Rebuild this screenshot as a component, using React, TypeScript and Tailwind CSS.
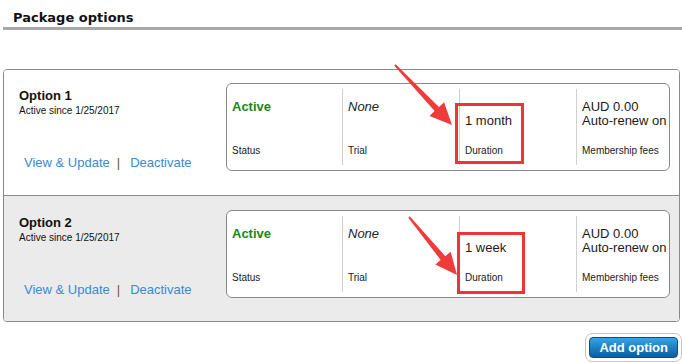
import React from "react";

type Opt = { name: string; duration: string; shaded: boolean };

const font = "font-['Liberation_Sans',Arial,sans-serif]";

function Card({ duration }: { duration: string }) {
  return (
    <div className="flex h-[88px] w-[444px] rounded-[6px] border border-[#8a8a8a] bg-white text-[#1a1a1a]">
      <div className="flex w-[115px] flex-col justify-between pl-[5px] pt-[16px] pb-[13px]">
        <div className="text-[13px] leading-[14px] font-bold text-[#18871a]">Active</div>
        <div className="text-[10px] leading-[12px]">Status</div>
      </div>
      <div className="my-[5px] w-px bg-[#cfcfcf]" />
      <div className="flex w-[116px] flex-col justify-between pl-[5px] pt-[16px] pb-[13px]">
        <div className="text-[13px] leading-[14px] italic text-[#222]">None</div>
        <div className="text-[10px] leading-[12px]">Trial</div>
      </div>
      <div className="my-[5px] w-px bg-[#cfcfcf]" />
      <div className="flex w-[116px] flex-col justify-between pl-[5px] pt-[16px] pb-[13px]">
        <div className="text-[13px] leading-[14px]">
          <div>&nbsp;</div>
          <div>{duration}</div>
        </div>
        <div className="text-[10px] leading-[12px]">Duration</div>
      </div>
      <div className="my-[5px] w-px bg-[#cfcfcf]" />
      <div className="flex flex-1 flex-col justify-between pl-[5px] pt-[16px] pb-[13px]">
        <div className="text-[13px] leading-[14px]">
          <div>AUD 0.00</div>
          <div>Auto-renew on</div>
        </div>
        <div className="text-[10px] leading-[12px]">Membership fees</div>
      </div>
    </div>
  );
}

function Row({ opt, first }: { opt: Opt; first: boolean }) {
  return (
    <div
      className={
        "flex " +
        (first ? "h-[125px] pt-[13px] bg-white" : "h-[126px] pt-[14px] border-t border-[#8a8a8a] bg-[#ebebeb]")
      }
    >
      <div className="flex w-[222px] flex-col">
        <div className="pl-[15px] pt-[5px]">
          <div className="text-[13px] leading-[16px] font-bold text-[#111]">{opt.name}</div>
          <div className="text-[10px] leading-[13px] text-[#111]">Active since 1/25/2017</div>
        </div>
        <div className="mt-[38px] flex pl-[20px] text-[13px] leading-[15px]">
          <span className="text-[#3a89cf]">View &amp; Update</span>
          <span className="ml-[7px] text-[#6b5a2e]">|</span>
          <span className="ml-[10px] text-[#3a89cf]">Deactivate</span>
        </div>
      </div>
      <Card duration={opt.duration} />
    </div>
  );
}

export default function App() {
  const opts: Opt[] = [
    { name: "Option 1", duration: "1 month", shaded: false },
    { name: "Option 2", duration: "1 week", shaded: true },
  ];
  return (
    <div className={"relative h-[363px] w-[682px] overflow-hidden bg-white " + font}>
      <div className="pl-[13px] pt-[10px] font-['DejaVu_Sans',sans-serif] text-[13px] leading-[15px] font-bold text-[#111]">
        Package options
      </div>
      <div className="ml-[3px] mt-[2px] h-[3px] bg-[#a8a8a8]" />
      <div className="mt-[39px] ml-[3px] mr-[2px] overflow-hidden rounded-[4px] border border-[#8a8a8a]">
        {opts.map((o, i) => (
          <Row key={o.name} opt={o} first={i === 0} />
        ))}
      </div>
      <div className="mt-[11px] flex justify-end">
        <div className="rounded-[7px] border border-[#c4c4c4] bg-white p-[3px]">
          <div className="flex h-[21px] items-center rounded-[4px] border border-[#0a4f86] bg-gradient-to-b from-[#35a5e6] to-[#0a5d9e] px-[9px] text-[13px] font-bold text-white">
            Add option
          </div>
        </div>
      </div>

      <div className="pointer-events-none absolute left-[455px] top-[103px] h-[61px] w-[69px] border-[3px] border-[#ee3434]" />
      <div className="pointer-events-none absolute left-[457px] top-[232px] h-[62px] w-[68px] border-[3px] border-[#ee3434]" />
      <svg className="pointer-events-none absolute left-0 top-0" width="682" height="363" viewBox="0 0 682 363">
        <polygon
          fill="#f03b3b"
          points="394.3,65.7 395.7,64.3 439,107 444.1,102.2 452,125 429.5,116 434.6,111.1"
        />
        <polygon
          fill="#f03b3b"
          points="408.3,217.7 409.7,216.3 445.3,256.2 450.7,251.7 457,275 435.3,264.5 440.7,260"
        />
      </svg>
    </div>
  );
}
